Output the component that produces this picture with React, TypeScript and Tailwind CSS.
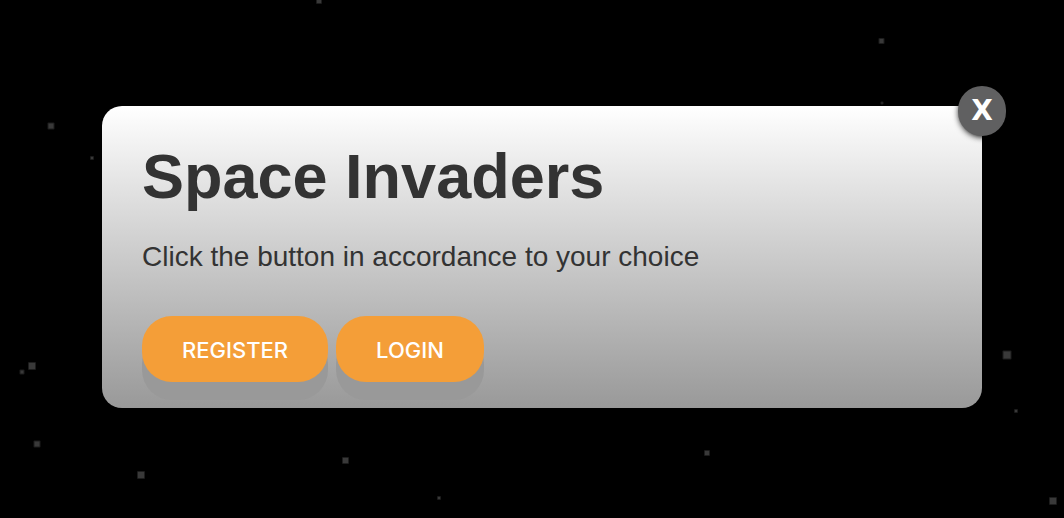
type Star = { x: number; y: number; size: number };

const stars: Star[] = [
  { x: 319, y: 1, size: 6 },
  { x: 881.5, y: 41, size: 6 },
  { x: 882, y: 103, size: 3 },
  { x: 51, y: 126, size: 7 },
  { x: 92, y: 158, size: 4 },
  { x: 32, y: 366, size: 8 },
  { x: 22, y: 372, size: 5 },
  { x: 37, y: 444, size: 7 },
  { x: 141, y: 475, size: 8 },
  { x: 345.5, y: 460.5, size: 7 },
  { x: 439, y: 498, size: 4 },
  { x: 707, y: 453, size: 6 },
  { x: 1007, y: 355, size: 9 },
  { x: 1016, y: 411, size: 4 },
  { x: 1053, y: 501, size: 8 },
];

function StarField() {
  return (
    <svg className="absolute inset-0 h-full w-full" aria-hidden="true">
      {stars.map(({ x, y, size }) => (
        <g key={`${x}-${y}`} fill="#393939">
          <rect x={x - size / 2} y={y - size / 2} width={size} height={size} rx="1" opacity="0.5" />
          <rect x={x - size / 2 + 1} y={y - size / 2 + 1} width={size - 2} height={size - 2} />
        </g>
      ))}
    </svg>
  );
}

function ActionButton({ children }: { children: string }) {
  return (
    <button
      type="button"
      className="h-[66px] rounded-[30px] bg-[#f49e38] px-10 pt-0.5 font-['Inter',sans-serif] text-[22px] font-medium text-white shadow-[0_18px_#999]"
    >
      {children}
    </button>
  );
}

export default function App() {
  return (
    <main className="relative min-h-screen overflow-hidden bg-black pt-[106px] pr-[82px] pb-[110px] pl-[102px]">
      <StarField />
      <section
        role="dialog"
        aria-labelledby="dialog-title"
        className="relative rounded-[20px] bg-linear-to-b from-white to-[#999] px-10 pt-8 pb-[26px] font-['Liberation_Sans',Arial,sans-serif] text-[#333]"
      >
        <button
          type="button"
          aria-label="Close"
          className="absolute -top-5 -right-6 h-[50px] w-12 rounded-3xl bg-[#606061] font-['DejaVu_Sans',sans-serif] text-[28px] leading-[48px] font-bold text-white shadow-[1px_1px_6px_#000]"
        >
          X
        </button>
        <h1 id="dialog-title" className="text-[63px] leading-[76px] font-bold">
          Space Invaders
        </h1>
        <p className="mt-[25px] text-[28px] leading-9">Click the button in accordance to your choice</p>
        <div className="mt-[41px] flex flex-wrap gap-2">
          <ActionButton>REGISTER</ActionButton>
          <ActionButton>LOGIN</ActionButton>
        </div>
      </section>
    </main>
  );
}
